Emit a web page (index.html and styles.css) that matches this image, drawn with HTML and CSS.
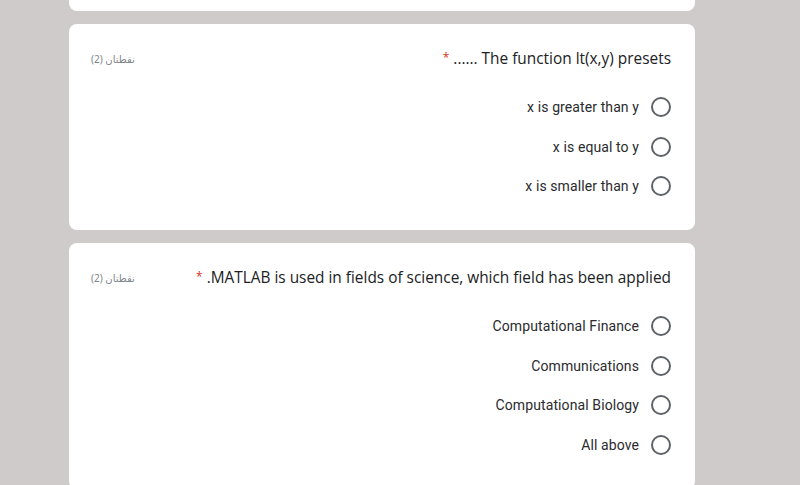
FILE: index.html
```html
<!DOCTYPE html>
<html lang="ar">
<head>
<meta charset="utf-8">
<link rel="stylesheet" href="styles.css">
</head>
<body>
<div class="page">
  <div class="card card-top"></div>

  <div class="card">
    <div class="q-head">
      <span class="points" dir="rtl">نقطتان (2)</span>
      <div class="q-title"><span class="req">*</span> ...... The function lt(x,y) presets</div>
    </div>
    <div class="options">
      <label class="opt"><span class="opt-text">x is greater than y</span><span class="radio"></span></label>
      <label class="opt"><span class="opt-text">x is equal to y</span><span class="radio"></span></label>
      <label class="opt"><span class="opt-text">x is smaller than y</span><span class="radio"></span></label>
    </div>
  </div>

  <div class="card">
    <div class="q-head">
      <span class="points" dir="rtl">نقطتان (2)</span>
      <div class="q-title"><span class="req">*</span> .MATLAB is used in fields of science, which field has been applied</div>
    </div>
    <div class="options">
      <label class="opt"><span class="opt-text">Computational Finance</span><span class="radio"></span></label>
      <label class="opt"><span class="opt-text">Communications</span><span class="radio"></span></label>
      <label class="opt"><span class="opt-text">Computational Biology</span><span class="radio"></span></label>
      <label class="opt"><span class="opt-text">All above</span><span class="radio"></span></label>
    </div>
  </div>
</div>
</body>
</html>
```

FILE: styles.css
```css
html, body {
  margin: 0;
  padding: 0;
  background: #cfcbcb;
  height: 100%;
  overflow: hidden;
}

.page {
  display: flex;
  flex-direction: column;
  gap: 13px;
  padding-left: 69px;
  width: 626px;
}

.card {
  background: #ffffff;
  border-radius: 8px;
  padding: 22.5px 24px 24px 22px;
}

.card-top {
  height: 11px;
  padding: 0;
  border-radius: 0 0 8px 8px;
}

.q-head {
  display: flex;
  justify-content: space-between;
  align-items: center;
  height: 24px;
}

.points {
  font-family: "Noto Sans", "DejaVu Sans", sans-serif;
  font-size: 10px;
  color: #80868b;
}

.q-title {
  font-family: "Open Sans", "Noto Sans", sans-serif;
  font-size: 15.4px;
  line-height: 24px;
  color: #202124;
  text-align: right;
}

.req {
  color: #d93025;
  font-size: 12px;
  vertical-align: 2px;
}

.options {
  margin-top: 17px;
  display: flex;
  flex-direction: column;
}

.opt {
  height: 39.5px;
  display: flex;
  justify-content: flex-end;
  align-items: center;
  gap: 12px;
}

.opt-text {
  font-family: Roboto, "Noto Sans", sans-serif;
  font-size: 14px;
  letter-spacing: 0.1px;
  color: #2a2b2e;
}

.radio {
  width: 16px;
  height: 16px;
  border: 2px solid #5f6368;
  border-radius: 50%;
}
```
